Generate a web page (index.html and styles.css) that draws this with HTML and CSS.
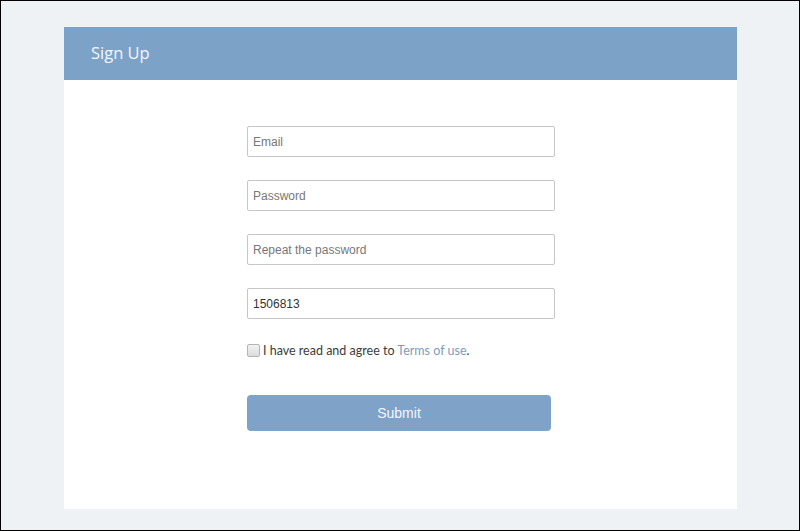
FILE: index.html
```html
<!DOCTYPE html>
<html lang="en">
<head>
  <meta charset="UTF-8" />
  <meta name="viewport" content="width=device-width, initial-scale=1" />
  <title>Sign Up</title>
  <link rel="stylesheet" href="styles.css">
</head>
<body>
  <div class="frame">
    <div class="card">
      <header>Sign Up</header>

      <!-- Registration form -->
      <form class="signup">
        <input type="text" placeholder="Email" />
        <input type="password" placeholder="Password" />
        <input type="password" placeholder="Repeat the password" />
        <input type="text" value="1506813" />

        <label class="agree">
          <input type="checkbox" />
          <span>I have read and agree to <a href="#">Terms of use</a>.</span>
        </label>

        <button type="button">Submit</button>
      </form>
    </div>
  </div>
</body>
</html>
```

FILE: styles.css
```css
body { margin: 0; padding: 0; font-family: 'Lato', sans-serif; color: #444; }

.frame {
  height: 531px;
  box-sizing: border-box;
  border: 1px solid #000;
  background: #eef2f5;
  padding: 26px 0 0 63px;
}

.card {
  width: 673px;
  height: 482px;
  background: #fff;
}

.card header {
  height: 53px;
  line-height: 52px;
  padding-left: 27px;
  background: #7da2c8;
  color: #f4f7fb;
  font-family: 'Open Sans', sans-serif;
  font-size: 16.5px;
}

.signup {
  width: 308px;
  margin-left: 183px;
  padding-top: 46px;
  display: flex;
  flex-direction: column;
}

.signup input[type="text"],
.signup input[type="password"] {
  height: 31px;
  box-sizing: border-box;
  margin: 0 0 23px;
  padding: 0 5px;
  border: 1px solid #c6c6c6;
  border-radius: 2px;
  font-family: 'Liberation Sans', Arial, sans-serif;
  font-size: 12px;
  color: #333;
  outline: none;
}

.signup input[type="text"]:nth-of-type(4) {
  margin-bottom: 0;
}

.signup input::placeholder {
  color: #777;
}

.agree {
  display: flex;
  align-items: center;
  gap: 3px;
  margin-top: 18px;
  height: 26px;
  font-size: 12.5px;
  color: #3c3c3c;
}

.agree input {
  appearance: none;
  width: 13px;
  height: 13px;
  margin: 0;
  border: 1px solid #b4b4b4;
  border-radius: 2px;
  background: linear-gradient(#f2f2f2, #dcdcdc);
}

.agree a {
  color: #7b9cc0;
  text-decoration: none;
}

.signup button {
  width: 304px;
  height: 36px;
  margin-top: 32px;
  padding-left: 6px;
  border: none;
  border-radius: 4px;
  background: #7ea2c8;
  color: #f4f7fb;
  font-family: 'Liberation Sans', Arial, sans-serif;
  font-size: 14px;
}
```
